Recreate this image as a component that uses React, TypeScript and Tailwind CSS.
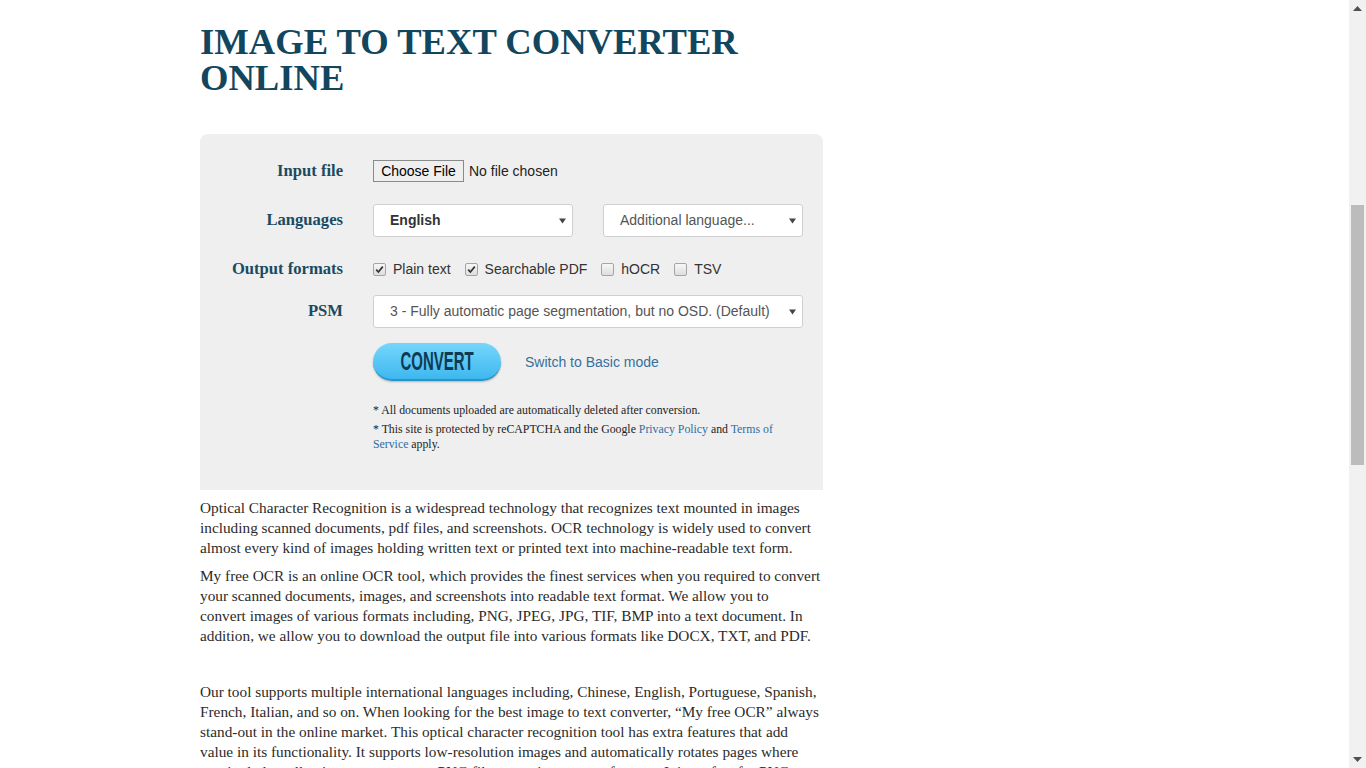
import React from "react";

const serif = { fontFamily: '"Liberation Serif", "Times New Roman", serif' };
const sans = { fontFamily: '"Liberation Sans", Arial, sans-serif' };

function Caret() {
  return (
    <svg width="7" height="6" viewBox="0 0 7 6" className="shrink-0">
      <path d="M0 0.5 H7 L3.5 5.5 Z" fill="#444" />
    </svg>
  );
}

function Check({ checked }: { checked: boolean }) {
  return (
    <span className="flex h-[13px] w-[13px] items-center justify-center rounded-[2px] border border-[#a5a5a5] bg-gradient-to-b from-[#f7f7f7] to-[#dedede]">
      {checked && (
        <svg width="9" height="9" viewBox="0 0 9 9">
          <path d="M1.2 4.6 L3.4 7 L7.8 1.6" stroke="#333" strokeWidth="1.7" fill="none" />
        </svg>
      )}
    </span>
  );
}

function Label({ children }: { children: React.ReactNode }) {
  return (
    <div className="w-[143px] shrink-0 text-right text-[16.6px] font-bold text-[#1b4b60]" style={serif}>
      {children}
    </div>
  );
}

export default function App() {
  return (
    <div className="flex h-[768px] w-full overflow-hidden bg-white">
      <main className="flex-1 pl-[200px]">
        <div className="w-[623px]">
          <h1
            className="pt-[24px] text-[36.6px] font-bold uppercase leading-[36px] text-[#12465e]"
            style={serif}
          >
            Image to text converter
            <br />
            online
          </h1>

          <section className="mt-[38px] h-[356px] rounded-t-lg bg-[#efefef] pt-[26px]">
            <div className="flex h-[22px] items-center gap-[30px]">
              <Label>Input file</Label>
              <div className="flex items-center gap-[5px] text-[14px] text-[#222]" style={sans}>
                <span className="flex h-[22px] w-[91px] items-center justify-center border border-[#8a8a8a] bg-[#efefef] text-[14px] text-black">
                  Choose File
                </span>
                <span>No file chosen</span>
              </div>
            </div>

            <div className="mt-[22px] flex h-[33px] items-center gap-[30px]">
              <Label>Languages</Label>
              <div className="flex items-center gap-[30px] text-[14px]" style={sans}>
                <div className="flex h-[33px] w-[200px] items-center justify-between rounded-[3px] border border-[#cfcfcf] bg-white pl-[16px] pr-[6px] font-bold text-[#333]">
                  <span>English</span>
                  <Caret />
                </div>
                <div className="flex h-[33px] w-[200px] items-center justify-between rounded-[3px] border border-[#cfcfcf] bg-white pl-[16px] pr-[6px] text-[#555]">
                  <span>Additional language...</span>
                  <Caret />
                </div>
              </div>
            </div>

            <div className="mt-[22px] flex h-[20px] items-center gap-[30px]">
              <Label>Output formats</Label>
              <div className="flex items-center text-[14px] text-[#333]" style={sans}>
                <Check checked />
                <span className="ml-[7px] mr-[14px]">Plain text</span>
                <Check checked />
                <span className="ml-[7px] mr-[14px]">Searchable PDF</span>
                <Check checked={false} />
                <span className="ml-[7px] mr-[14px]">hOCR</span>
                <Check checked={false} />
                <span className="ml-[7px]">TSV</span>
              </div>
            </div>

            <div className="mt-[16px] flex h-[33px] items-center gap-[30px]">
              <Label>PSM</Label>
              <div
                className="flex h-[33px] w-[430px] items-center justify-between rounded-[3px] border border-[#cfcfcf] bg-white pl-[16px] pr-[6px] text-[14px] text-[#555]"
                style={sans}
              >
                <span>3 - Fully automatic page segmentation, but no OSD. (Default)</span>
                <Caret />
              </div>
            </div>

            <div className="ml-[173px] mt-[15px] flex items-center gap-[24px]">
              <div className="flex h-[38px] w-[128px] items-center justify-center overflow-hidden rounded-full border-b-2 border-[#2b93c6] bg-gradient-to-b from-[#74d6fb] to-[#3cb8ef] shadow-[0_1px_2px_rgba(0,0,0,0.25)]">
                <span
                  className="inline-block scale-x-[0.6] text-[25px] font-bold leading-none text-[#0f3a52]"
                  style={sans}
                >
                  CONVERT
                </span>
              </div>
              <span className="text-[14px] text-[#36709e]" style={sans}>
                Switch to Basic mode
              </span>
            </div>

            <div className="ml-[173px] mt-[22px] w-[410px] text-[11.8px] leading-[15px] text-[#222]" style={serif}>
              <p className="mb-[4px]">* All documents uploaded are automatically deleted after conversion.</p>
              <p>
                * This site is protected by reCAPTCHA and the Google{" "}
                <span className="text-[#2e6da4]">Privacy Policy</span> and{" "}
                <span className="text-[#2e6da4]">Terms of Service</span> apply.
              </p>
            </div>
          </section>

          <div className="mt-[8px] whitespace-nowrap text-[15.3px] leading-[20px] text-[#2b2b2b]" style={serif}>
            <p>
              Optical Character Recognition is a widespread technology that recognizes text mounted in images
              <br />
              including scanned documents, pdf files, and screenshots. OCR technology is widely used to convert
              <br />
              almost every kind of images holding written text or printed text into machine-readable text form.
            </p>
            <p className="mt-[8px]">
              My free OCR is an online OCR tool, which provides the finest services when you required to convert
              <br />
              your scanned documents, images, and screenshots into readable text format. We allow you to
              <br />
              convert images of various formats including, PNG, JPEG, JPG, TIF, BMP into a text document. In
              <br />
              addition, we allow you to download the output file into various formats like DOCX, TXT, and PDF.
            </p>
            <p className="mt-[36px]">
              Our tool supports multiple international languages including, Chinese, English, Portuguese, Spanish,
              <br />
              French, Italian, and so on. When looking for the best image to text converter, “My free OCR” always
              <br />
              stand-out in the online market. This optical character recognition tool has extra features that add
              <br />
              value in its functionality. It supports low-resolution images and automatically rotates pages where
              <br />
              required, thus allowing you to convert PNG files to various output formats. It is perfect for PNG
            </p>
          </div>
        </div>
      </main>

      <aside className="flex w-[17px] shrink-0 flex-col items-center bg-[#f1f1f1]">
        <div className="flex h-[17px] items-center justify-center">
          <svg width="9" height="5" viewBox="0 0 9 5">
            <path d="M0 5 L4.5 0 L9 5 Z" fill="#505050" />
          </svg>
        </div>
        <div className="flex-1 w-full px-[2px]">
          <div className="mt-[188px] h-[260px] w-full bg-[#bcbcbc]" />
        </div>
        <div className="flex h-[17px] items-center justify-center">
          <svg width="9" height="5" viewBox="0 0 9 5">
            <path d="M0 0 L4.5 5 L9 0 Z" fill="#505050" />
          </svg>
        </div>
      </aside>
    </div>
  );
}
